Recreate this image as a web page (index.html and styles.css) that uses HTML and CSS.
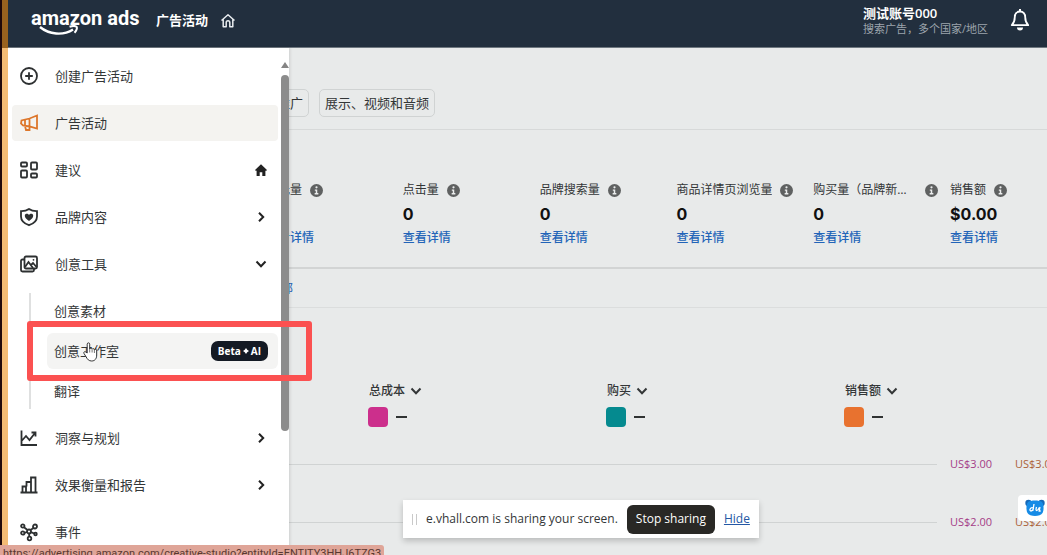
FILE: index.html
```html
<!DOCTYPE html>
<html lang="zh-CN">
<head>
<meta charset="utf-8">
<title>amazon ads</title>
<link rel="stylesheet" href="styles.css">
</head>
<body>
<svg class="defs" width="0" height="0" aria-hidden="true">
  <symbol id="info" viewBox="0 0 14 14"><circle cx="7" cy="7" r="7" fill="#5f6161"/><circle cx="7" cy="3.6" r="1.2" fill="#eceeee"/><path d="M5.2 5.8h2.6v4h1.2v1.4H5V9.800h1.200V7.200h-1z" fill="#eceeee"/></symbol>
  <symbol id="down" viewBox="0 0 12 12"><path d="M1.500 3.500 6 8.200l4.500-4.700" fill="none" stroke="currentColor" stroke-width="2"/></symbol>
  <symbol id="right" viewBox="0 0 12 12"><path d="M4 1.800 8.200 6 4 10.200" fill="none" stroke="currentColor" stroke-width="2"/></symbol>
</svg>
<div class="app">
  <header class="topbar">
    <a class="logo" href="#">amazon ads
      <svg class="smile" viewBox="0 0 40 12" fill="none" stroke="#fff" stroke-width="2.400"><path d="M1 2c9 7.500 23 9 33 2.500"/><path d="M30.500 1.800c3-1 6-1 7 0s0 4-2 6" stroke-width="2"/></svg>
    </a>
    <a class="crumb" href="#">广告活动</a>
    <a class="home" href="#" aria-label="主页"><svg viewBox="0 0 16 16" width="16" height="16" fill="none" stroke="#e8ecef" stroke-width="1.500" stroke-linejoin="round"><path d="M1.500 7.500 8 1.800l6.500 5.700M3.200 6.500v7.300h3V9.500a1.800 1.800 0 0 1 3.600 0v4.300h3V6.500"/></svg></a>
    <div class="account"><strong>测试账号000</strong><span>搜索广告，多个国家/地区</span></div>
    <button class="bell" aria-label="通知"><svg viewBox="0 0 20 24" width="20" height="24"><path d="M10 3.500c-3.400 0-5.200 2.600-5.200 5.500 0 4.600-1.300 6.400-3 8.200h16.400c-1.700-1.800-3-3.600-3-8.200 0-2.900-1.800-5.500-5.200-5.500z" fill="none" stroke="#fff" stroke-width="1.800" stroke-linejoin="round"/><path d="M10 1v3" stroke="#fff" stroke-width="2"/><path d="M7 19.500h6a3 3 0 0 1-6 0z" fill="#fff"/></svg></button>
  </header>

  <main class="main">
    <nav class="tabs"><a class="tab" href="#">品牌推广</a><a class="tab" href="#">展示、视频和音频</a></nav>
    <section class="metrics">
      <div class="metric"><div class="metric-name"><span>曝光量</span><svg><use href="#info"/></svg></div><b>&nbsp;</b><a href="#">查看详情</a></div>
      <div class="metric"><div class="metric-name"><span>点击量</span><svg><use href="#info"/></svg></div><b>0</b><a href="#">查看详情</a></div>
      <div class="metric"><div class="metric-name"><span>品牌搜索量</span><svg><use href="#info"/></svg></div><b>0</b><a href="#">查看详情</a></div>
      <div class="metric"><div class="metric-name"><span>商品详情页浏览量</span><svg><use href="#info"/></svg></div><b>0</b><a href="#">查看详情</a></div>
      <div class="metric"><div class="metric-name"><span>购买量（品牌新客销售）</span><svg><use href="#info"/></svg></div><b>0</b><a href="#">查看详情</a></div>
      <div class="metric"><div class="metric-name"><span>销售额</span><svg><use href="#info"/></svg></div><b>$0.00</b><a href="#">查看详情</a></div>
    </section>
    <div class="filter"><a href="#">全部</a></div>
    <section class="series">
      <div class="serie"><button>总成本<svg><use href="#down"/></svg></button><div class="key"><i class="swatch pink"></i><i class="dash"></i></div></div>
      <div class="serie"><button>购买<svg><use href="#down"/></svg></button><div class="key"><i class="swatch teal"></i><i class="dash"></i></div></div>
      <div class="serie"><button>销售额<svg><use href="#down"/></svg></button><div class="key"><i class="swatch orange"></i><i class="dash"></i></div></div>
    </section>
    <section class="chart">
      <div class="tick"><hr><span class="cost">US$3.00</span><span class="sales">US$3.00</span></div>
      <div class="tick"><hr><span class="cost">US$2.00</span><span class="sales">US$2.00</span></div>
    </section>
  </main>

  <aside class="sidebar">
    <nav class="menu">
      <a class="item" href="#"><svg class="icon" viewBox="0 0 18 18"><circle cx="9" cy="9" r="8"/><path d="M9 5.200v7.600M5.200 9h7.600"/></svg><span>创建广告活动</span></a>
      <a class="item active" href="#"><svg class="icon" viewBox="0 0 18 18"><path d="M17 1.500v13L9.500 12.500 3 11.500 1 9.500l.5-3L9.500 4.500zM9.500 4.500v8M5 12l1 4h3.500v-3.500M5 6v5.500"/></svg><span>广告活动</span></a>
      <a class="item" href="#"><svg class="icon" viewBox="0 0 18 18"><rect x="1" y="1.500" width="6" height="4" rx="1"/><rect x="11" y="1.500" width="6" height="7" rx="1"/><rect x="1" y="9.500" width="6" height="7" rx="1"/><rect x="11" y="12.500" width="6" height="4" rx="1"/></svg><span>建议</span><svg class="mark" viewBox="0 0 12 12"><path d="M6 .3 12 6l-1 .9-.6-.5V12H7.300V8.300H4.700V12H1.600V6.400L1 6.900 0 6z" fill="currentColor"/></svg></a>
      <a class="item" href="#"><svg class="icon" viewBox="0 0 18 18"><path d="M9 1c2.500 1.800 5 2.300 8 2.200v5.300c0 4-3 7-8 8.700-5-1.700-8-4.700-8-8.700V3.200C4 3.300 6.500 2.800 9 1z"/><path d="M9 13C6 10.800 4.800 9.400 4.800 7.700c0-2.300 3.200-2.600 4.200-.6 1-2 4.200-1.700 4.200.6 0 1.700-1.200 3.100-4.200 5.300z" class="solid"/></svg><span>品牌内容</span><svg class="mark"><use href="#right"/></svg></a>
      <a class="item" href="#"><svg class="icon" viewBox="0 0 18 18"><rect x="4.500" y="1.500" width="12.500" height="12" rx="1.500"/><path d="M4 4.500H2.500C1.500 4.500 1 5 1 6v9c0 1 .5 1.500 1.500 1.500h10c1 0 1.500-.5 1.500-1.500v-1M5 12l3.500-5 4.500 6M11 10l2-2 3.500 4"/><circle cx="13.500" cy="4.800" r=".9" class="solid"/></svg><span>创意工具</span><svg class="mark"><use href="#down"/></svg></a>
      <div class="submenu">
        <a class="sub" href="#">创意素材</a>
        <a class="sub active" href="#">创意工作室<em class="badge">Beta<svg viewBox="0 0 8 8" width="6" height="6"><path d="M4 0l1.600 2.400L8 4 5.600 5.600 4 8 2.400 5.600 0 4l2.400-1.600z" fill="#fff"/></svg>AI</em></a>
        <a class="sub" href="#">翻译</a>
      </div>
      <a class="item" href="#"><svg class="icon" viewBox="0 0 18 18"><path d="M1.500 1.500v14.500H17M2 11.500l4-4.500 3.500 4 5.500-7M11.500 3.500h4v4"/></svg><span>洞察与规划</span><svg class="mark"><use href="#right"/></svg></a>
      <a class="item" href="#"><svg class="icon" viewBox="0 0 18 18"><path d="M.5 16.500H17.500M2.500 16.500v-6h3.500v6M6.500 10.500V6H11v10.500M11 6.500v-5h4.500v15"/></svg><span>效果衡量和报告</span><svg class="mark"><use href="#right"/></svg></a>
      <a class="item" href="#"><svg class="icon" viewBox="0 0 18 18"><circle cx="2.800" cy="3" r="1.700"/><circle cx="15" cy="3.500" r="2"/><circle cx="2.800" cy="10" r="1.700"/><circle cx="9" cy="8.500" r="2"/><circle cx="9.500" cy="15.500" r="1.800"/><circle cx="15.500" cy="11" r="1.300"/><path d="M4 4.200 7.500 7M13.500 5 10.500 7M4.500 9.800 7 9M9.200 10.500v3M11 9.200l3.200 1.300"/></svg><span>事件</span></a>
    </nav>
    <div class="scroll"><i class="scroll-up"></i><i class="scroll-thumb"></i></div>
  </aside>

  <i class="edge"></i>
  <div class="highlight"></div>
  <svg class="cursor" viewBox="0 0 16 20"><path d="M4.200 11V2.200c0-1.800 2.500-1.800 2.500 0V7c.3-1.200 2.200-1.100 2.400.2.400-1 2.100-.8 2.300.6.600-.9 2.300-.6 2.300 1V13c0 3.500-1.700 6-5 6-3 0-4.200-1.700-5.500-4L1 11.500c-.8-1.600 1-2.500 2-1.300z" fill="#fff" stroke="#333" stroke-width="1"/><path d="M6.700 7v3.500M9.100 7.500v3M11.400 8v3" stroke="#555" fill="none" stroke-width=".8"/></svg>
  <div class="share"><i class="grip"></i><span>e.vhall.com is sharing your screen.</span><button>Stop sharing</button><a href="#">Hide</a></div>
  <button class="assistant" aria-label="助手"><svg viewBox="0 0 20 18" width="20" height="18"><circle cx="3.500" cy="4" r="3.200" fill="#1769b8"/><circle cx="16.500" cy="4" r="3.200" fill="#1769b8"/><path d="M3 3C6 1 14 1 17 3c2 3 2 8 .5 11-2 4-13 4-15 0C1 11 1 6 3 3z" fill="#168be6"/><g fill="none" stroke="#fff" stroke-width="1.300"><path d="M9 5 7.800 12M8.500 9c-3.500-1.500-4.500 3-2.500 3 1.500 0 2.300-1.500 2.500-3M11.500 8c-1.500 5 1 4.500 2.800.500M15 8l-.8 4h1.500"/></g></svg></button>
  <div class="status">https://advertising.amazon.com/creative-studio?entityId=ENTITY3HHJ6TZG3</div>
</div>
</body>
</html>
```
FILE: styles.css
```css
* { box-sizing: border-box; }
body {
  margin: 0;
  font-family: "Open Sans", "Noto Sans CJK SC", sans-serif;
  font-size: 13px;
  line-height: 18px;
  color: #333637;
  background: #e8eaea;
}
a { color: inherit; text-decoration: none; }
button { font: inherit; color: inherit; border: 0; padding: 0; background: none; }
.defs { position: absolute; }
.app { position: relative; height: 100vh; overflow: hidden; display: flex; flex-direction: column; }

.topbar {
  flex: none;
  display: flex;
  align-items: flex-start;
  height: 48px;
  padding: 0 17px 0 31px;
  background: #222f3e;
  border-bottom: 1px solid #6f7880;
  color: #fff;
}
.logo { position: relative; width: 105px; margin-top: 6px; font: 700 20px/24px Roboto, sans-serif; white-space: nowrap; }
.smile { position: absolute; left: 8px; top: 19px; width: 40px; height: 12px; }
.crumb { margin: 11px 0 0 20px; font-weight: 700; }
.home { margin: 13px 0 0 12px; height: 16px; }
.home svg { display: block; }
.account { display: flex; flex-direction: column; margin: 5px 22px 0 auto; font-size: 11px; line-height: 15px; color: #9da5ad; }
.account strong { font-size: 13px; line-height: 16px; font-weight: 600; color: #fff; }
.bell { margin-top: 8px; height: 24px; }

.main { flex: 1; display: flex; flex-direction: column; }
.tabs { display: flex; gap: 10px; padding: 41px 0 12px 245px; border-bottom: 1px solid #d7d9d9; }
.tab { padding: 4px 5px; border: 1px solid #d0d3d3; border-radius: 5px; white-space: nowrap; }
.metrics {
  display: grid;
  grid-template-columns: repeat(5, minmax(0, 137fr)) minmax(0, 97fr);
  padding: 51px 0 20px 266px;
  border-bottom: 2px solid #d2d4d4;
}
.metric { display: flex; flex-direction: column; font-size: 12px; padding-right: 12px; }
.metric-name { display: flex; align-items: center; gap: 8px; }
.metric-name span { overflow: hidden; text-overflow: ellipsis; white-space: nowrap; }
.metric-name svg { flex: none; width: 13px; height: 13px; }
.metric b { font: 700 16px/30px Inter, sans-serif; color: #111; }
.metric a { color: #2264b8; font-weight: 500; }
.filter { padding: 11px 0 9px 269px; font-size: 12px; color: #2264b8; border-bottom: 1px solid #dbdddd; }
.series { display: grid; grid-template-columns: repeat(2, 238fr) 203fr; padding: 74px 0 28px 368px; font-size: 12px; }
.serie { display: flex; flex-direction: column; align-items: flex-start; gap: 7px; }
.serie button { display: flex; align-items: center; gap: 5px; padding-left: 1px; font-weight: 500; }
.serie svg { width: 12px; height: 12px; }
.key { display: flex; align-items: center; gap: 8px; }
.swatch { width: 20px; height: 20px; border-radius: 4px; }
.pink { background: #cc2f8c; }
.teal { background: #058a8f; }
.orange { background: #e8722f; }
.dash { width: 11px; height: 2px; background: #303333; }
.chart { display: flex; flex-direction: column; gap: 40px; margin-right: -12px; padding-left: 289px; font-size: 11px; }
.tick { display: flex; align-items: center; }
.tick hr { flex: 1; margin: 0 13px 0 0; border: 0; border-top: 1px solid #d0d3d3; }
.cost { width: 65px; color: #a43c87; }
.sales { width: 44px; color: #ab5f38; }

.sidebar { position: absolute; left: 8px; top: 48px; bottom: 0; width: 281px; display: flex; background: #fff; box-shadow: 1px 0 3px rgba(0, 0, 0, .12); overflow: hidden; }
.menu { flex: 1; display: flex; flex-direction: column; gap: 11px; padding: 10px 3px 0 4px; }
.item { flex: none; display: flex; align-items: center; gap: 17px; height: 36px; padding: 0 11px 0 8px; border-radius: 4px; }
.item.active { background: #f4f3f0; }
.icon { width: 18px; height: 18px; fill: none; stroke: #2d3031; stroke-width: 1.800; overflow: visible; }
.icon .solid { fill: #2d3031; stroke: none; }
.active .icon { stroke: #dd762a; }
.mark { width: 12px; height: 12px; margin-left: auto; color: #222; }
.submenu { flex: none; display: flex; flex-direction: column; gap: 4px; margin-left: 17px; padding-left: 16px; border-left: 2px solid #dfe0e0; }
.sub { display: flex; align-items: center; justify-content: space-between; height: 36px; padding: 0 10px 0 7px; border-radius: 6px; }
.sub.active { background: #f4f4f3; }
.badge { display: flex; align-items: center; gap: 2px; padding: 0 7px; border-radius: 7px; background: #141a24; color: #fff; font: 700 10px/20px "Open Sans", sans-serif; }
.scroll { width: 8px; padding-top: 14px; display: flex; flex-direction: column; gap: 7px; }
.scroll-up { border: 4px solid transparent; border-top: 0; border-bottom: 6px solid #858585; }
.scroll-thumb { height: 356px; border-radius: 4px; background: #8c8c8c; }

.edge { position: absolute; inset: 0 auto 0 0; width: 8px; border-left: 2px solid #20090a; background: linear-gradient(#99621f 48px, #f3bb74 48px); }
.highlight { position: absolute; left: 27px; top: 321px; width: 285px; height: 60px; border: 6px solid #fb5151; border-radius: 3px; }
.cursor { position: absolute; left: 83px; top: 342px; width: 16px; height: 20px; }
.share {
  position: absolute;
  left: 403px;
  bottom: 17px;
  display: flex;
  align-items: center;
  height: 38px;
  padding: 0 9px;
  background: #fff;
  box-shadow: 0 3px 6px rgba(0, 0, 0, .2);
  font: 12px/18px "Open Sans", sans-serif;
  white-space: nowrap;
}
.grip { width: 5px; height: 11px; margin-right: 9px; border: solid #c9c9c9; border-width: 0 1px; }
.share button { height: 29px; margin: 0 9px; padding: 0 9px; border-radius: 6px; background: #292825; color: #fff; }
.share a { color: #2457a4; font-weight: 500; text-decoration: underline; }
.assistant { position: absolute; right: 0; bottom: 34px; width: 29px; height: 26px; padding-left: 7px; border-radius: 4px 0 0 4px; background: #fff; }
.assistant svg { display: block; }
.status { position: absolute; left: 0; bottom: 0; width: 384px; height: 10px; padding-left: 3px; overflow: hidden; border-top-right-radius: 3px; background: #dfa598; color: #5a3832; font: 11px/18px Roboto, sans-serif; white-space: nowrap; }
```
